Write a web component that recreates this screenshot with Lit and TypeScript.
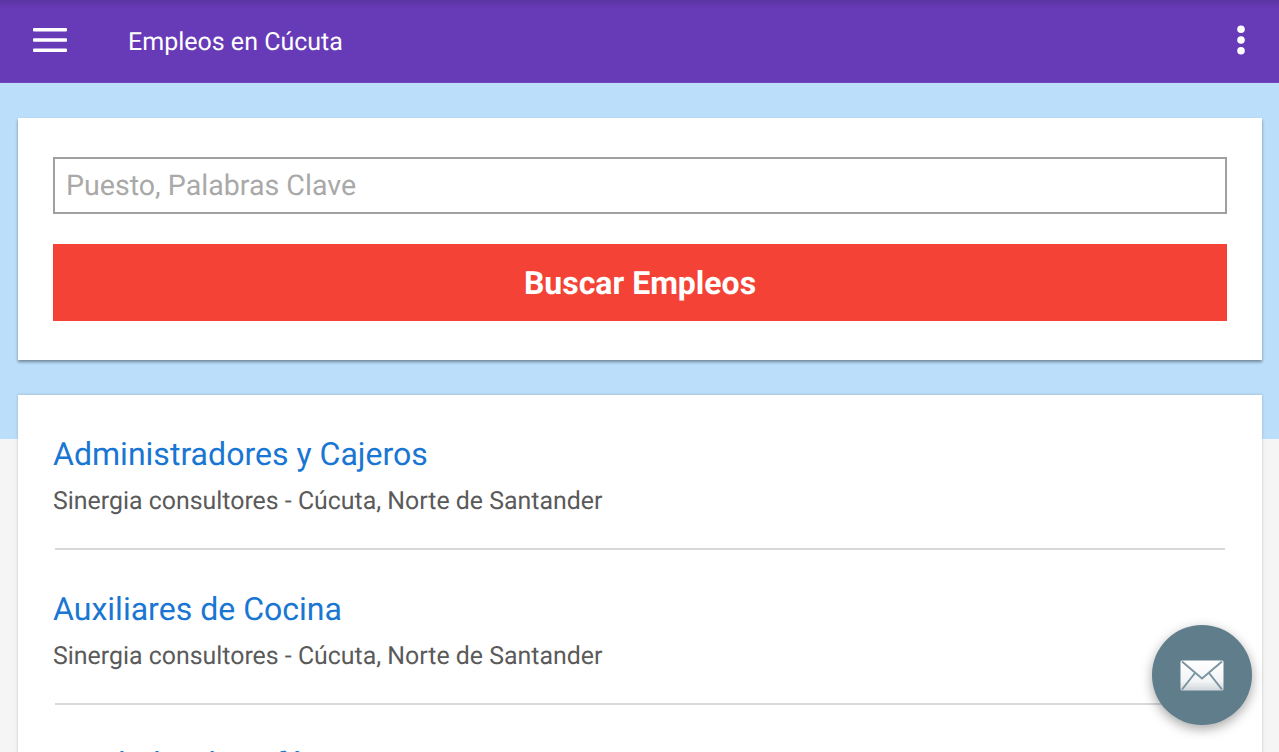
import { LitElement, html, css } from 'lit';
import { customElement } from 'lit/decorators.js';

const JOBS = [
  { title: 'Administradores y Cajeros', meta: 'Sinergia consultores - Cúcuta, Norte de Santander' },
  { title: 'Auxiliares de Cocina', meta: 'Sinergia consultores - Cúcuta, Norte de Santander' },
  { title: 'Vendedor de café', meta: 'Sinergia consultores - Cúcuta, Norte de Santander' },
];

@customElement('app-root')
export class AppRoot extends LitElement {
  static styles = css`
    :host {
      display: block;
      height: 752px;
      overflow: hidden;
      position: relative;
      background: linear-gradient(#bbdefb 439px, #f5f5f5 439px);
      font-family: Roboto, "Liberation Sans", sans-serif;
      text-rendering: geometricPrecision;
    }
    .toolbar {
      height: 83px;
      box-sizing: border-box;
      border-bottom: 1px solid #7347bd;
      background: linear-gradient(#5a35a0, #673ab7 8px);
      display: flex;
      align-items: center;
      color: #fff;
      padding: 0 33px 3px;
    }
    .burger {
      width: 34px;
      height: 24px;
      display: block;
    }
    .title {
      margin: 5px 0 0 61px;
      font-size: 25px;
      flex: 1;
    }
    .dots {
      width: 10px;
      height: 30px;
      display: block;
    }
    .content {
      padding: 35px 17px 0 18px;
      display: flex;
      flex-direction: column;
      gap: 35px;
    }
    .card {
      background: #fff;
      box-shadow: 0 2px 3px rgba(0, 0, 0, 0.4);
    }
    .search {
      padding: 39px 35px;
      display: flex;
      flex-direction: column;
      gap: 30px;
    }
    .field {
      height: 57px;
      box-sizing: border-box;
      border: 2px solid #a0a0a0;
      padding: 0 11px 2px;
      display: flex;
      align-items: center;
      font-size: 28.6px;
      color: #a9a9a9;
    }
    .go {
      height: 77px;
      background: #f44336;
      color: #fff;
      font-size: 32px;
      font-weight: 700;
      display: flex;
      align-items: center;
      justify-content: center;
    }
    .list {
      box-shadow: 0 0 3px rgba(0, 0, 0, 0.2);
      padding: 0 37px;
    }
    .job {
      height: 155px;
      box-sizing: border-box;
      padding-top: 39px;
      border-bottom: 2px solid #d9d9d9;
    }
    .job a {
      display: block;
      color: #1976d2;
      font-size: 32.05px;
      line-height: 40px;
      margin-left: -2px;
    }
    .job p {
      margin: 12px 0 0 -2px;
      color: #5a5a5a;
      font-size: 24.9px;
      line-height: 32px;
    }
    .fab {
      position: absolute;
      left: 1152px;
      top: 625px;
      width: 100px;
      height: 100px;
      border-radius: 50%;
      background: #607d8b;
      box-shadow: 0 4px 12px rgba(0, 0, 0, 0.35);
      display: flex;
      align-items: center;
      justify-content: center;
    }
    .fab svg {
      width: 44px;
      height: 31px;
      display: block;
    }
  `;

  render() {
    return html`
      <div class="toolbar">
        <svg class="burger" viewBox="0 0 34 24" fill="#fff">
          <rect y="0" width="34" height="3.6" rx="1" />
          <rect y="10.2" width="34" height="3.6" rx="1" />
          <rect y="20.4" width="34" height="3.6" rx="1" />
        </svg>
        <div class="title">Empleos en Cúcuta</div>
        <svg class="dots" viewBox="0 0 10 30" fill="#fff">
          <circle cx="5" cy="4.3" r="3.8" />
          <circle cx="5" cy="15" r="3.8" />
          <circle cx="5" cy="25.7" r="3.8" />
        </svg>
      </div>
      <div class="content">
        <div class="card search">
          <div class="field">Puesto, Palabras Clave</div>
          <div class="go">Buscar Empleos</div>
        </div>
        <div class="card list">
          ${JOBS.map(
            (job) => html`
              <div class="job">
                <a>${job.title}</a>
                <p>${job.meta}</p>
              </div>
            `
          )}
        </div>
      </div>
      <div class="fab">
        <svg viewBox="0 0 44 31">
          <defs>
            <linearGradient id="env" x1="0" y1="0" x2="0" y2="1">
              <stop offset="0" stop-color="#ffffff" />
              <stop offset="0.7" stop-color="#f2f4f5" />
              <stop offset="1" stop-color="#cfd6da" />
            </linearGradient>
          </defs>
          <rect x="0.5" y="0.5" width="43" height="30" rx="1.5" fill="url(#env)" />
          <path d="M2 1.5l20 17 20-17M2 29.5l13-16.5M42 29.5L29 13" fill="none" stroke="#7b94a1" stroke-width="2" />
        </svg>
      </div>
    `;
  }
}
